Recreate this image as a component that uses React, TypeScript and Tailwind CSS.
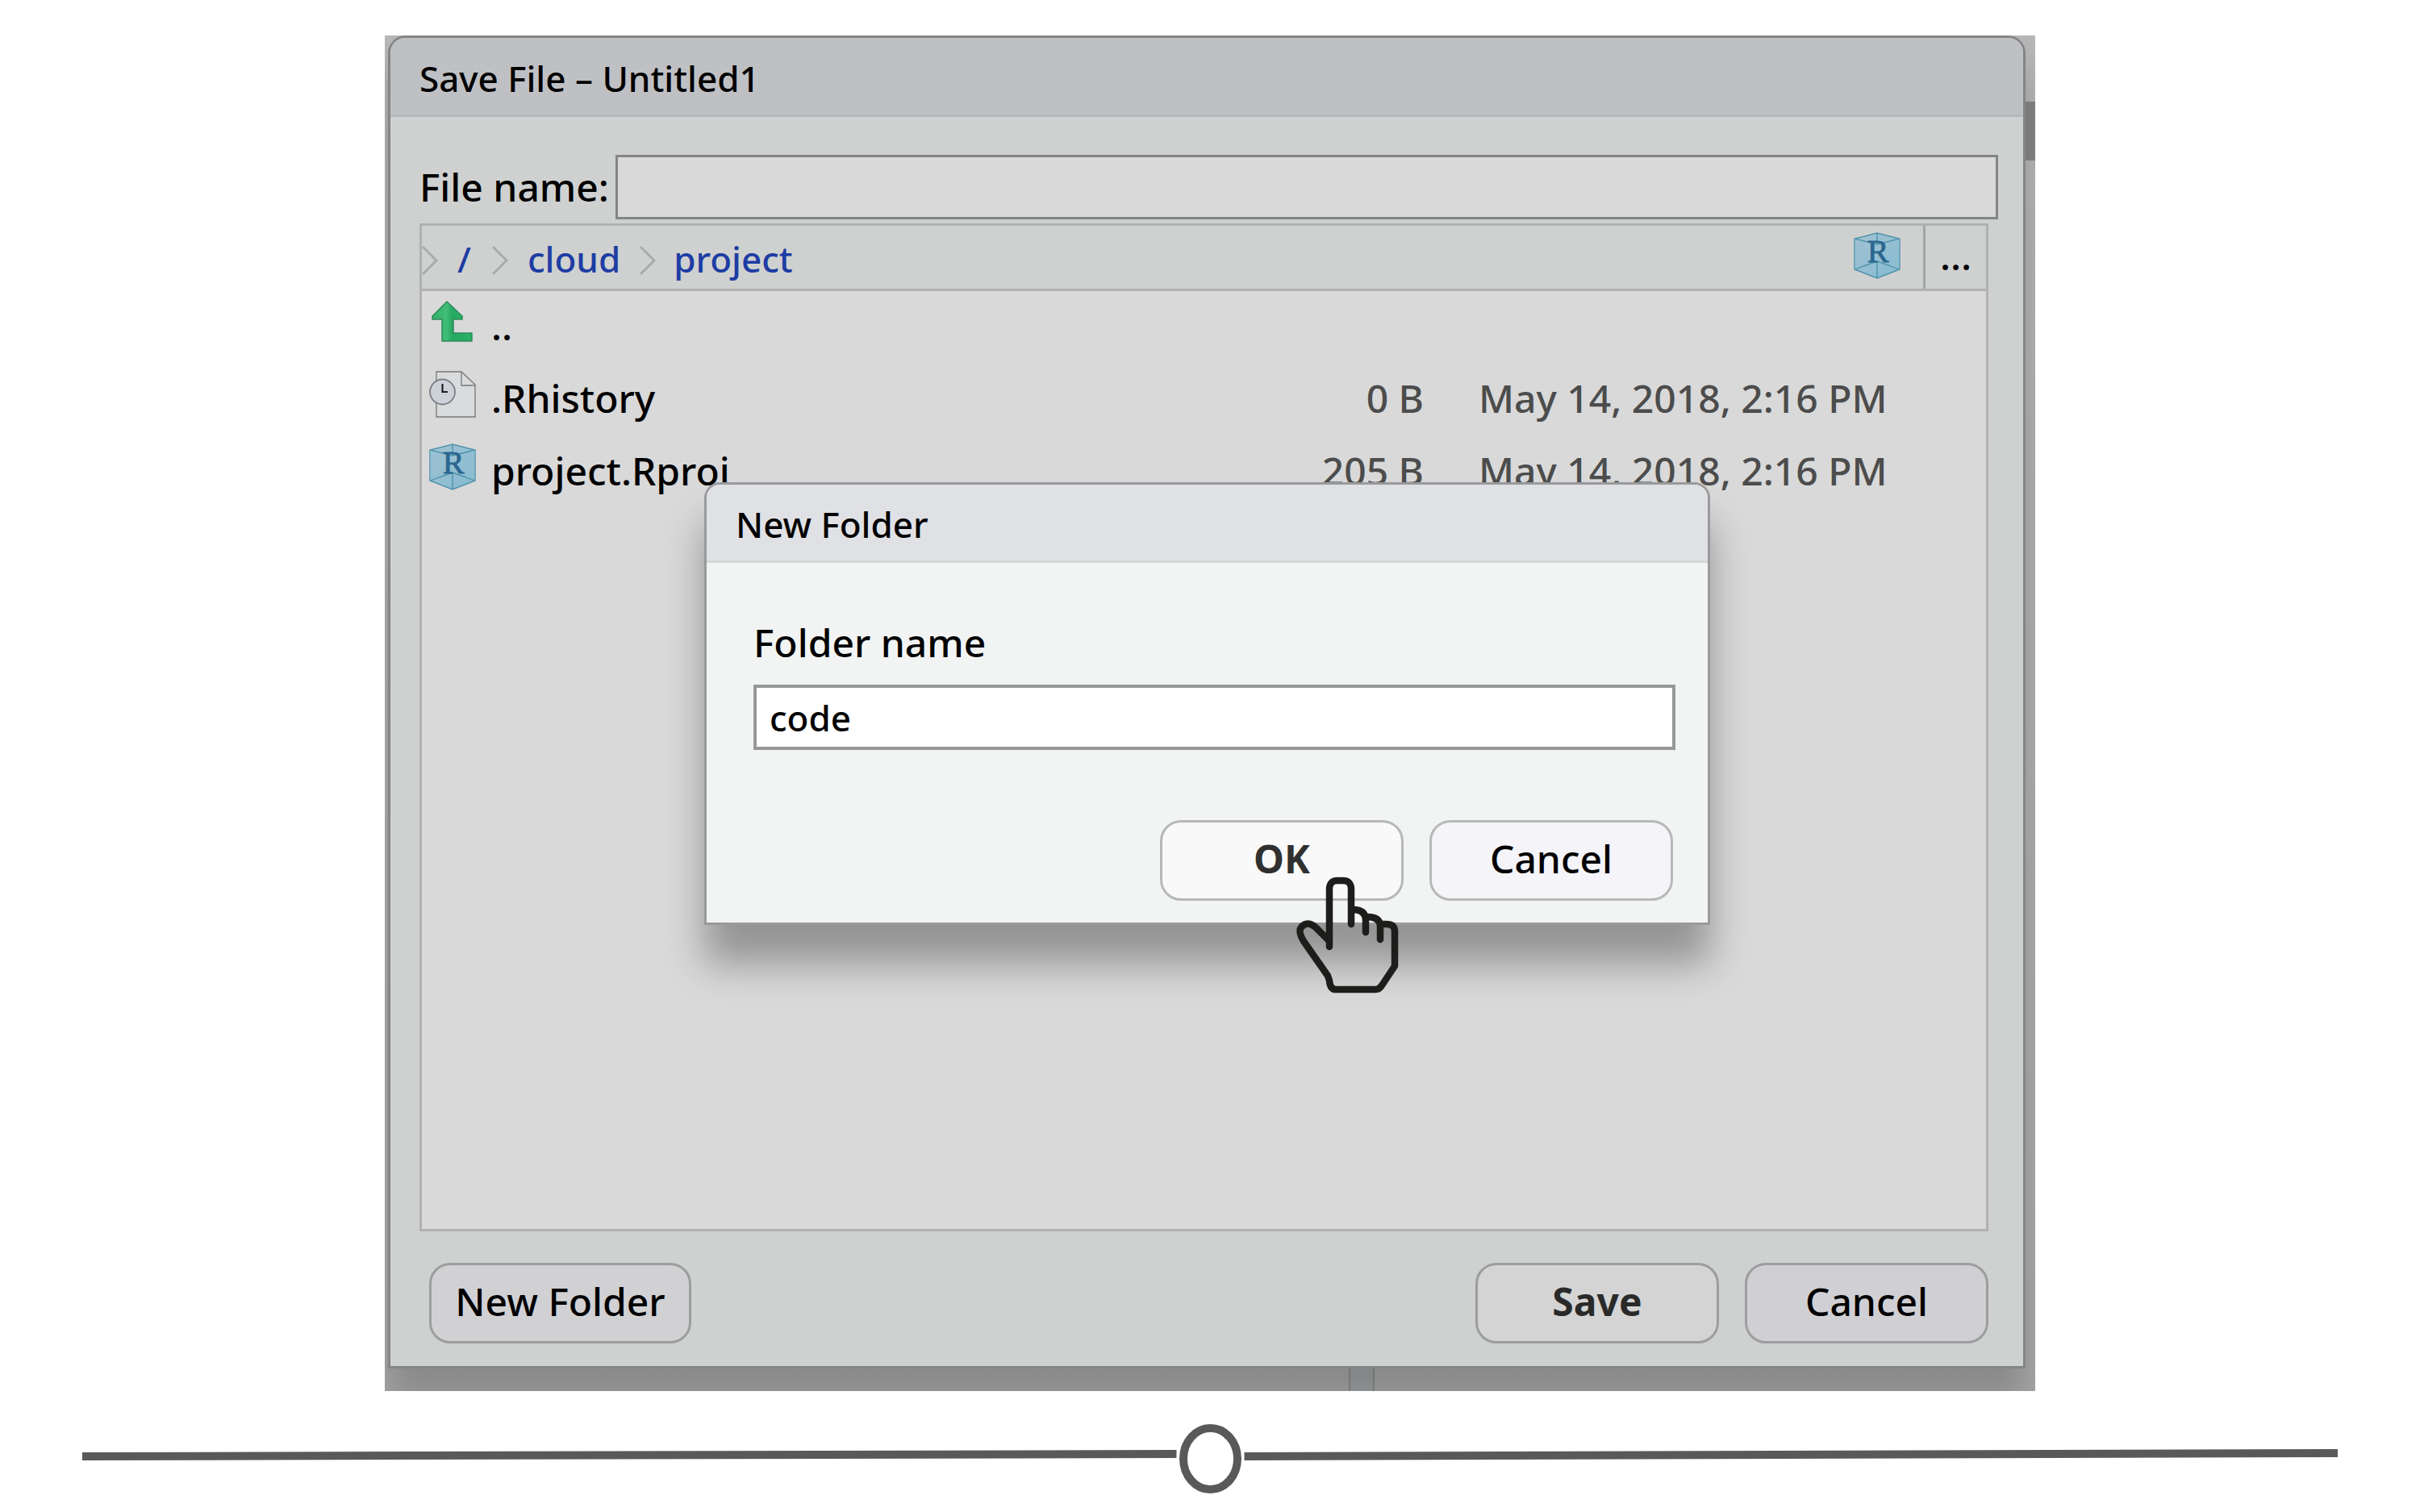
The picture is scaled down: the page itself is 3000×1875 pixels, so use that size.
import React from "react";

function Cube() {
  return (
    <svg viewBox="0 0 58 58" className="h-[58px] w-[58px]" aria-hidden="true">
      <defs>
        <linearGradient id="cube" x1="0" y1="0" x2="1" y2="1">
          <stop offset="0" stopColor="#a3c3d2" />
          <stop offset="1" stopColor="#84bad2" />
        </linearGradient>
      </defs>
      <path d="M29 1L57 8V46L29 57L1 46V8Z" fill="url(#cube)" stroke="#4f93ab" strokeWidth="1.5" />
      <path d="M1 8L29 15L57 8M1 46L29 36L57 46M29 1V15M29 36V57" fill="none" stroke="#4f93ab" strokeWidth="1.4" />
      <path d="M1 8L12 12V42L1 46M57 8L46 12V42L57 46" fill="#93bdd0" opacity="0.4" />
      <text x="30" y="37" textAnchor="middle" fontSize="40" fill="#2b6690" stroke="#2b6690" strokeWidth="0.8" className="font-['Liberation_Serif',serif] font-normal">R</text>
    </svg>
  );
}

function UpArrow() {
  return (
    <svg viewBox="0 0 58 58" className="h-[58px] w-[58px]" aria-hidden="true">
      <defs>
        <linearGradient id="up" x1="0" y1="0" x2="1" y2="0">
          <stop offset="0" stopColor="#2fae68" />
          <stop offset="0.35" stopColor="#41be78" />
          <stop offset="0.5" stopColor="#28a862" />
          <stop offset="1" stopColor="#28b268" />
        </linearGradient>
      </defs>
      <path d="M22 4L41 22V26H30V43H53V53H16V26H4V22Z" fill="url(#up)" stroke="#2c8a58" strokeWidth="1.5" strokeLinejoin="round" />
    </svg>
  );
}

function HistoryDoc() {
  return (
    <svg viewBox="0 0 58 58" className="h-[58px] w-[58px]" aria-hidden="true">
      <path d="M9 1H40L57 17V57H9Z" fill="#dadbdc" stroke="#76777a" strokeWidth="1.3" />
      <path d="M40 1V18H57" fill="none" stroke="#76777a" strokeWidth="1.3" />
      <circle cx="16.5" cy="26" r="15.5" fill="#cdd1d8" stroke="#7c7e84" strokeWidth="1.8" />
      <path d="M16.5 16V26H23" fill="none" stroke="#1c1e24" strokeWidth="2.2" />
    </svg>
  );
}

function Chevron() {
  return (
    <svg viewBox="0 0 20 38" className="h-[38px] w-5 shrink-0" aria-hidden="true">
      <path d="M1 2L18 19L1 36" fill="none" stroke="#a9abab" strokeWidth="3" />
    </svg>
  );
}

function Hand() {
  return (
    <svg viewBox="1606 1085 128 147" className="pointer-events-none absolute right-[383px] -bottom-[89px] h-[147px] w-32" aria-hidden="true">
      <g fill="none" stroke="#1d1d1b" strokeWidth="8.5" strokeLinecap="round" strokeLinejoin="round">
        <path d="M1648 1173V1102Q1648 1091 1658 1091H1665Q1675 1091 1675 1102V1145" />
        <path d="M1677 1127Q1693 1127 1693 1140V1155" />
        <path d="M1695 1136Q1711 1136 1711 1148V1164" />
        <path d="M1713 1145H1718Q1729 1145 1729 1154V1197L1713 1221Q1710 1226 1705 1226H1656Q1649 1226 1648 1215L1646 1209L1616 1166Q1609 1154 1613 1149Q1620 1140 1631 1149L1647 1165" />
      </g>
    </svg>
  );
}

const button =
  "h-[100px] rounded-[26px] border-[3px] pb-1 text-center text-[48px] leading-[60px]";

const files = [
  { name: "..", size: "", date: "", icon: <UpArrow /> },
  { name: ".Rhistory", size: "0 B", date: "May 14, 2018, 2:16 PM", icon: <HistoryDoc /> },
  { name: "project.Rproj", size: "205 B", date: "May 14, 2018, 2:16 PM", icon: <Cube /> },
];

function NewFolderDialog() {
  return (
    <section
      aria-label="New Folder"
      className="absolute top-[554px] right-[403px] left-[396px] rounded-t-[20px] border-[3px] border-[#989a9b] bg-[#f2f4f3] shadow-[0_48px_48px_0_rgba(0,0,0,0.32)]"
    >
      <h2 className="rounded-t-[16px] border-b-[3px] border-[#d6d8d8] bg-[#e0e1e5] px-9 pt-[19px] pb-[15px] text-[44px] leading-[60px]">
        New Folder
      </h2>
      <div className="pt-[67px] pr-10 pl-[58px]">
        <label htmlFor="folder" className="block text-[48px] leading-[64px]">Folder name</label>
        <input
          id="folder"
          defaultValue="code"
          className="mt-5 block h-[81px] w-full border-[4px] border-[#979998] bg-white px-4 text-[44px]"
        />
      </div>
      <div className="mt-[87px] flex justify-end gap-8 pr-[43px] pb-[27px]">
        <button className={button + " w-[302px] border-[#b7b8b8] bg-[#f9f9f9] font-bold text-[#303030]"}>OK</button>
        <button className={button + " w-[302px] border-[#b7b8b8] bg-[#f5f5f9]"}>Cancel</button>
      </div>
      <Hand />
    </section>
  );
}

export default function App() {
  return (
    <main className="min-h-screen bg-white pt-11 font-['Noto_Sans',sans-serif] font-medium text-black">
      <div className="relative mx-auto w-[68.2%] overflow-hidden bg-linear-to-b from-[#b6b6b6] to-[#a8a8a8] pr-3 pb-7 pl-1">
        <div className="absolute top-[82px] right-0 h-[73px] w-5 bg-[#858585]" />
        <div className="absolute bottom-0 left-[1195px] h-10 w-8 border-x-2 border-[#8b8e8e] bg-[#a0a4a4]" />
        <section
          aria-label="Save File"
          className="relative rounded-t-[22px] border-[3px] border-[#848587] bg-[#cfd1d0] shadow-[0_40px_40px_rgba(0,0,0,0.18)]"
        >
          <h1 className="rounded-t-[18px] border-b-[3px] border-[#b6b8b9] bg-[#bfc0c4] px-9 pt-5 pb-[15px] text-[44px] leading-[60px]">
            Save File – Untitled1
          </h1>
          <div className="mt-[47px] flex items-center gap-2 pr-[31px] pl-9">
            <label htmlFor="file" className="shrink-0 text-[48px] leading-[64px]">File name:</label>
            <input id="file" className="h-[80px] min-w-0 flex-1 border-[3px] border-[#838584] bg-[#d9d9d9] px-4 text-[44px]" />
          </div>
          <div className="mt-[5px] mr-[43px] ml-9 min-h-[1250px] border-[3px] border-[#b0b2b1] bg-[#d9d9d9]">
            <nav className="flex h-[81px] items-center border-b-[3px] border-[#b0b2b1] bg-[#cfd1d0] text-[44px] leading-[60px] text-[#1e3da4]">
              <span className="flex pt-2"><Chevron /></span>
              <a href="#root" className="ml-6 pt-1">/</a>
              <span className="ml-[26px] flex pt-2"><Chevron /></span>
              <a href="#cloud" className="ml-6 pt-1">cloud</a>
              <span className="ml-6 flex pt-2"><Chevron /></span>
              <a href="#project" className="ml-[22px] pt-1">project</a>
              <button aria-label="Project root" className="mr-[28px] ml-auto pb-1"><Cube /></button>
              <button className="h-full w-[78px] border-l-[3px] border-[#a3a5a5] pb-1 text-[48px] text-black">...</button>
            </nav>
            <table className="w-full text-left text-[48px] leading-[64px]">
              <tbody>
                {files.map((f) => (
                  <tr key={f.name} className="h-[90px]">
                    <td className="w-[86px] pb-[14px] pl-[9px]">{f.icon}</td>
                    <td className="pb-1">{f.name}</td>
                    <td className="pb-1 text-right text-[#4c4c4c]">{f.size}</td>
                    <td className="w-[697px] pb-1 pl-[68px] text-[#4c4c4c]">{f.date}</td>
                  </tr>
                ))}
              </tbody>
            </table>
          </div>
          <div className="flex gap-8 pt-[39px] pr-[43px] pb-[28px] pl-[48px]">
            <button className={button + " mr-auto w-[325px] border-[#9c9e9e] bg-[#d1d1d4]"}>New Folder</button>
            <button className={button + " w-[302px] border-[#9c9e9e] bg-[#d4d4d4] font-bold text-[#2a2a2a]"}>Save</button>
            <button className={button + " w-[302px] border-[#9c9e9e] bg-[#d0d0d4]"}>Cancel</button>
          </div>
        </section>
        <NewFolderDialog />
      </div>
      <svg viewBox="0 0 2795 88" className="mx-auto mt-10 block w-[93.2%]" aria-hidden="true">
        <path d="M0 41L1356 38M1440 41L2795 37" stroke="#595959" strokeWidth="10" />
        <ellipse cx="1398" cy="44" rx="33.5" ry="38" fill="white" stroke="#595959" strokeWidth="10" />
      </svg>
    </main>
  );
}
